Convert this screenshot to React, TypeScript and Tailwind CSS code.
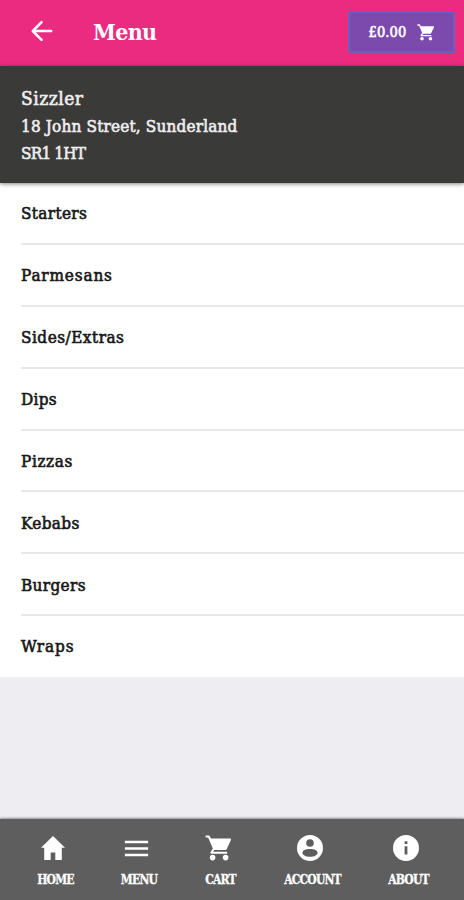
import React from 'react';
import { IoMdMenu } from 'react-icons/io';

interface IconProps {
  className?: string;
}

interface Category {
  name: string;
  className: string;
}

interface Tab {
  label: string;
  icon: React.ReactNode;
  className: string;
}

const ArrowIcon: React.FC<IconProps> = ({ className }) => (
  <svg viewBox="0 0 22 22" fill="none" stroke="currentColor" strokeWidth="2.5" strokeLinecap="round" strokeLinejoin="round" className={className}>
    <path d="M20.2 11H2M10.6 2.1 1.8 11l8.8 8.9" />
  </svg>
);

const CartIcon: React.FC<IconProps> = ({ className }) => (
  <svg viewBox="0 0 26 26" fill="currentColor" className={className}>
    <path d="M4.500 3.600h20.700c.7 0 1 .6.8 1.200l-4.200 9.100c-.3.7-.8 1-1.500 1H8.700z" />
    <path d="M.6 1.500h3.200l5.200 12-2.700 4.200h15.800" fill="none" stroke="currentColor" strokeWidth="2" strokeLinejoin="round" />
    <circle cx="7.6" cy="22.6" r="2.8" />
    <circle cx="20.6" cy="22.6" r="2.8" />
  </svg>
);

const HomeIcon: React.FC<IconProps> = ({ className }) => (
  <svg viewBox="0 0 24 24" fill="currentColor" className={className}>
    <path d="M12 0 0 11.800h3.200V24h6.500v-7.600h4.600V24h6.500V11.800H24z" />
  </svg>
);

const AccountIcon: React.FC<IconProps> = ({ className }) => (
  <svg viewBox="0 0 26 26" fill="currentColor" className={className}>
    <path
      fillRule="evenodd"
      d="M13 0a13 13 0 1 0 0 26 13 13 0 0 0 0-26zm0 4.200a3.800 3.800 0 1 1 0 7.600 3.800 3.800 0 0 1 0-7.600zm0 9.800c4.500 0 7.600 1.500 7.600 3.700s-3.100 4.100-7.600 4.100-7.600-1.900-7.600-4.100S8.500 14 13 14z"
    />
  </svg>
);

const InfoIcon: React.FC<IconProps> = ({ className }) => (
  <svg viewBox="0 0 26 26" fill="currentColor" className={className}>
    <path fillRule="evenodd" d="M13 0a13 13 0 1 0 0 26 13 13 0 0 0 0-26zm-1.400 6.200h2.800v2.800h-2.800zm0 5h2.800v8.200h-2.800z" />
  </svg>
);

const categories: Category[] = [
  { name: 'Starters', className: 'tracking-[0.35px]' },
  { name: 'Parmesans', className: 'tracking-[0.85px]' },
  { name: 'Sides/Extras', className: 'tracking-[0.5px]' },
  { name: 'Dips', className: 'tracking-[0.3px]' },
  { name: 'Pizzas', className: 'tracking-[0.6px]' },
  { name: 'Kebabs', className: 'tracking-[0.35px]' },
  { name: 'Burgers', className: 'tracking-[0.35px]' },
  { name: 'Wraps', className: 'tracking-[0.9px]' }
];

const tabs: Tab[] = [
  { label: 'HOME', icon: <HomeIcon className="size-[24px] -translate-x-[3px]" />, className: 'w-[111px]' },
  { label: 'MENU', icon: <IoMdMenu className="size-[31px] -translate-x-[3px]" />, className: 'w-[56px]' },
  { label: 'CART', icon: <CartIcon className="size-[26px] -translate-x-[3px]" />, className: 'w-[107px]' },
  { label: 'ACCOUNT', icon: <AccountIcon className="size-[26px] -translate-x-[3px]" />, className: 'w-[77px]' },
  { label: 'ABOUT', icon: <InfoIcon className="size-[26px] -translate-x-[3px]" />, className: 'w-[115px]' }
];

const Header: React.FC = () => (
  <header className="flex h-[66px] shrink-0 items-center bg-[#ea2b80] pl-[31px] pr-[9px] pb-[3px] text-white">
    <ArrowIcon className="-mt-0.5 size-[22px]" />
    <h1 className="ml-[40px] text-[23px] leading-none font-bold tracking-[-0.7px]">Menu</h1>
    <button className="ml-auto flex h-[42px] w-[107px] items-center justify-center rounded-[3px] border-2 border-[#6762c0] bg-[#7c4aad] pt-0.5 text-[14.5px] tracking-[0.1px] [-webkit-text-stroke:0.6px_#fff]">
      £0.00
      <CartIcon className="mb-px ml-[11px] size-[17px]" />
    </button>
  </header>
);

// Name and address of the selected restaurant
const RestaurantInfo: React.FC = () => (
  <section className="z-10 h-[117px] shrink-0 bg-[#3a3a39] pt-[20px] pl-[21px] text-[17px] leading-[27px] text-[#eee] shadow-[0_1px_4px_rgba(0,0,0,0.5)] [-webkit-text-stroke:0.6px_#eee]">
    <h2 className="-mt-px text-[19px] tracking-[0.5px]">Sizzler</h2>
    <p className="mt-px tracking-[0.17px]">18 John Street, Sunderland</p>
    <p className="tracking-[-0.8px]">SR1 1HT</p>
  </section>
);

const CategoryList: React.FC = () => (
  <ul className="h-[494px] shrink-0 bg-white pl-[21px] text-[17px] text-[#171717] [-webkit-text-stroke:0.6px_#171717]">
    {categories.map(category => (
      <li
        key={category.name}
        className="flex h-[61.9px] items-center border-b-2 border-[#e8e8e8] pt-0.5 last:border-b-0 last:pt-0"
      >
        <span className={category.className}>{category.name}</span>
      </li>
    ))}
  </ul>
);

const TabBar: React.FC = () => (
  <nav className="mt-auto flex h-[81px] shrink-0 bg-[#5e5e5e] text-white shadow-[0_-1px_2px_rgba(0,0,0,0.4)]">
    {tabs.map(tab => (
      <div key={tab.label} className={`flex shrink-0 flex-col items-center pt-[13px] ${tab.className}`}>
        <div className="flex h-[32px] items-center">{tab.icon}</div>
        <span className="mt-[9px] text-[12px] leading-[14px] font-bold tracking-[-0.8px] [-webkit-text-stroke:0.3px_#fff]">
          {tab.label}
        </span>
      </div>
    ))}
  </nav>
);

export default function App() {
  return (
    <div className="flex h-screen w-full flex-col overflow-hidden bg-[#eeedf2] font-['DejaVu_Serif_Condensed','DejaVu_Serif',serif]">
      <Header />
      <RestaurantInfo />
      <CategoryList />
      <TabBar />
    </div>
  );
}
